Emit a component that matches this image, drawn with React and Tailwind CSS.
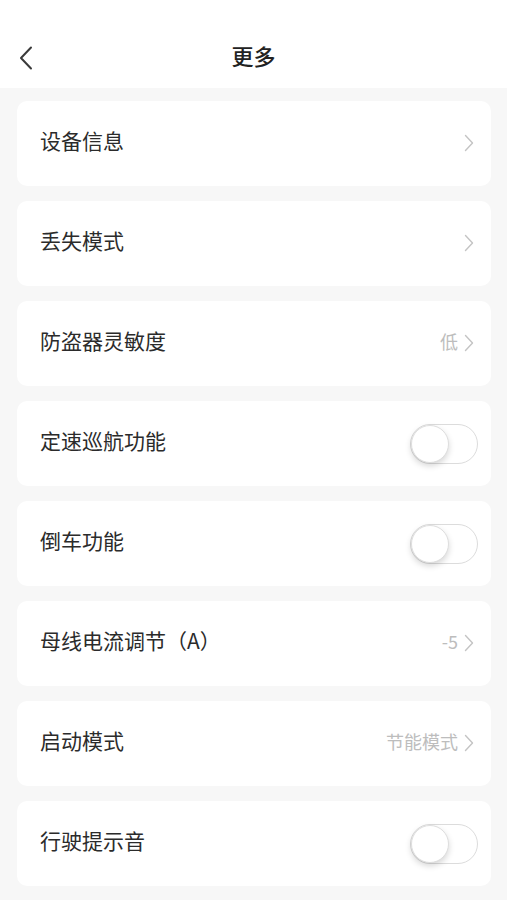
import React from 'react';

const rows = [
  { label: '设备信息', type: 'link' },
  { label: '丢失模式', type: 'link' },
  { label: '防盗器灵敏度', type: 'link', value: '低' },
  { label: '定速巡航功能', type: 'toggle' },
  { label: '倒车功能', type: 'toggle' },
  { label: '母线电流调节（A）', type: 'link', value: '-5' },
  { label: '启动模式', type: 'link', value: '节能模式' },
  { label: '行驶提示音', type: 'toggle' },
  { label: '', type: 'none' },
];

const Chevron = () => (
  <svg width="10" height="18" viewBox="0 0 10 18" fill="none" className="text-[#c4c4c4]">
    <path d="M1.5 1.5 L8.5 9 L1.5 16.5" stroke="currentColor" strokeWidth="1.4" strokeLinecap="round" strokeLinejoin="round" />
  </svg>
);

const Toggle = () => (
  <div className="relative h-[40px] w-[68px] rounded-full border border-[#dcdcdc] bg-white">
    <div className="absolute left-[0px] top-[0px] h-[38px] w-[38px] rounded-full border border-[#dedede] bg-white shadow-[0_3px_6px_rgba(0,0,0,0.16)]" />
  </div>
);

const Row = ({ label, type, value }) => (
  <div
    className={`flex h-[85px] shrink-0 items-center justify-between rounded-[10px] bg-white pl-[23px] ${
      type === 'toggle' ? 'pr-[13px]' : 'pr-[17px]'
    }`}
  >
    <span className="pb-[5px] text-[21px] text-[#2b2b2b]">{label}</span>
    {type === 'link' && (
      <div className="flex items-center gap-[6px] pb-[1px]">
        {value && <span className="pb-[3px] text-[18px] text-[#bdbdbd]">{value}</span>}
        <Chevron />
      </div>
    )}
    {type === 'toggle' && <Toggle />}
  </div>
);

export default function App() {
  return (
    <div
      className="flex h-[900px] w-[507px] flex-col overflow-hidden bg-[#f7f7f7]"
      style={{ fontFamily: '"Noto Sans CJK SC", "Noto Sans", sans-serif' }}
    >
      <div className="relative flex h-[88px] shrink-0 items-center justify-center bg-white pt-[22px]">
        <svg
          width="14"
          height="24"
          viewBox="0 0 14 24"
          fill="none"
          className="absolute left-[19px] top-[46px] text-[#3a3a3a]"
        >
          <path d="M12 1.5 L2 12 L12 22.5" stroke="currentColor" strokeWidth="2" strokeLinecap="round" strokeLinejoin="round" />
        </svg>
        <span className="text-[22px] font-medium text-[#222]">更多</span>
      </div>
      <div className="flex flex-col gap-[15px] pl-[17px] pr-[16px] pt-[13px]">
        {rows.map((r, i) => (
          <Row key={i} {...r} />
        ))}
      </div>
    </div>
  );
}
